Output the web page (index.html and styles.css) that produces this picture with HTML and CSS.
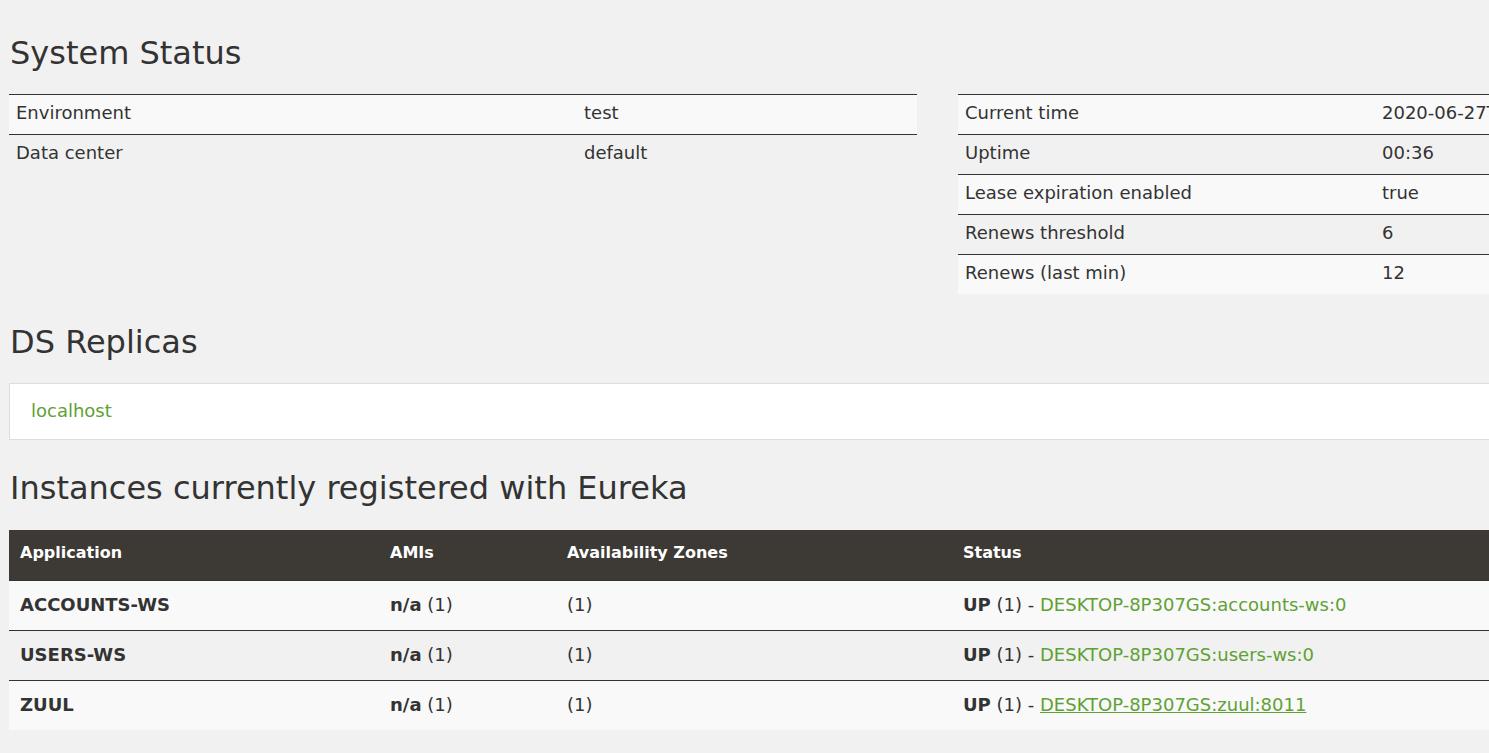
FILE: index.html
```html
<!DOCTYPE html>
<html>
<head>
<meta charset="utf-8">
<link rel="stylesheet" href="styles.css">
</head>
<body>
<div class="page">
  <h1 class="heading">System Status</h1>
  <div class="status-row">
    <table class="kv kv-left">
      <tr class="odd"><td class="k">Environment</td><td>test</td></tr>
      <tr><td class="k">Data center</td><td>default</td></tr>
    </table>
    <table class="kv kv-right">
      <tr class="odd"><td class="k">Current time</td><td>2020-06-27T21:44:38 +0300</td></tr>
      <tr><td class="k">Uptime</td><td>00:36</td></tr>
      <tr class="odd"><td class="k">Lease expiration enabled</td><td>true</td></tr>
      <tr><td class="k">Renews threshold</td><td>6</td></tr>
      <tr class="odd"><td class="k">Renews (last min)</td><td>12</td></tr>
    </table>
  </div>

  <h1 class="heading">DS Replicas</h1>
  <div class="panel">
    <a class="link" href="#">localhost</a>
  </div>

  <h1 class="heading heading-last">Instances currently registered with Eureka</h1>
  <table class="instances">
    <thead>
      <tr><th class="c-app">Application</th><th class="c-ami">AMIs</th><th class="c-az">Availability Zones</th><th>Status</th></tr>
    </thead>
    <tbody>
      <tr class="odd"><td><b>ACCOUNTS-WS</b></td><td><b>n/a</b> (1)</td><td>(1)</td><td><b>UP</b> (1) - <a class="link" href="#">DESKTOP-8P307GS:accounts-ws:0</a></td></tr>
      <tr><td><b>USERS-WS</b></td><td><b>n/a</b> (1)</td><td>(1)</td><td><b>UP</b> (1) - <a class="link" href="#">DESKTOP-8P307GS:users-ws:0</a></td></tr>
      <tr class="odd"><td><b>ZUUL</b></td><td><b>n/a</b> (1)</td><td>(1)</td><td><b>UP</b> (1) - <a class="link hover" href="#">DESKTOP-8P307GS:zuul:8011</a></td></tr>
    </tbody>
  </table>
</div>
</body>
</html>
```

FILE: styles.css
```css
html, body {
  margin: 0;
  padding: 0;
  background: #f1f1f1;
  overflow: hidden;
}
body {
  font-family: "DejaVu Sans", "Open Sans", sans-serif;
  font-size: 18px;
  color: #333;
}
.page {
  width: 1857px;
  padding: 37px 0 40px 9px;
}
.heading {
  font-family: "DejaVu Sans", sans-serif;
  font-weight: normal;
  font-size: 32px;
  line-height: 33px;
  margin: 32px 0 24px 1px;
  color: #333;
}
.page > .heading:first-child {
  margin-top: 0;
  margin-bottom: 24px;
}
.heading.heading-last {
  margin-bottom: 25px;
}
.status-row {
  display: flex;
  gap: 41px;
  align-items: flex-start;
}
.kv {
  width: 908px;
  border-collapse: collapse;
  table-layout: fixed;
}
.kv td {
  border-top: 1px solid #333;
  padding: 6px 7px 10px;
  line-height: 23px;
  text-align: left;
}
.kv tr.odd td {
  background: #f9f9f9;
}
.kv-left td.k { width: 554px; }
.kv-right td.k { width: 403px; }
.kv td:last-child { white-space: nowrap; }

.panel {
  background: #fff;
  border: 1px solid #ddd;
  height: 52px;
  box-sizing: content-box;
  display: flex;
  align-items: center;
  padding: 0 21px 3px;
}
.link {
  color: #5fa134;
  text-decoration: none;
}
.link.hover {
  text-decoration: underline;
}
.instances {
  width: 1857px;
  border-collapse: collapse;
  table-layout: fixed;
}
.instances th {
  background: #3d3934;
  color: #fff;
  font-size: 16px;
  font-weight: bold;
  text-align: left;
  padding: 11px 11px 16px;
  line-height: 23px;
}
.instances td {
  border-top: 1px solid #333;
  padding: 12px 11px 14px;
  line-height: 23px;
}
.instances tbody tr.odd td { background: #f9f9f9; }
.instances b { font-weight: bold; }
.c-app { width: 348px; }
.c-ami { width: 155px; }
.c-az { width: 374px; }
```
